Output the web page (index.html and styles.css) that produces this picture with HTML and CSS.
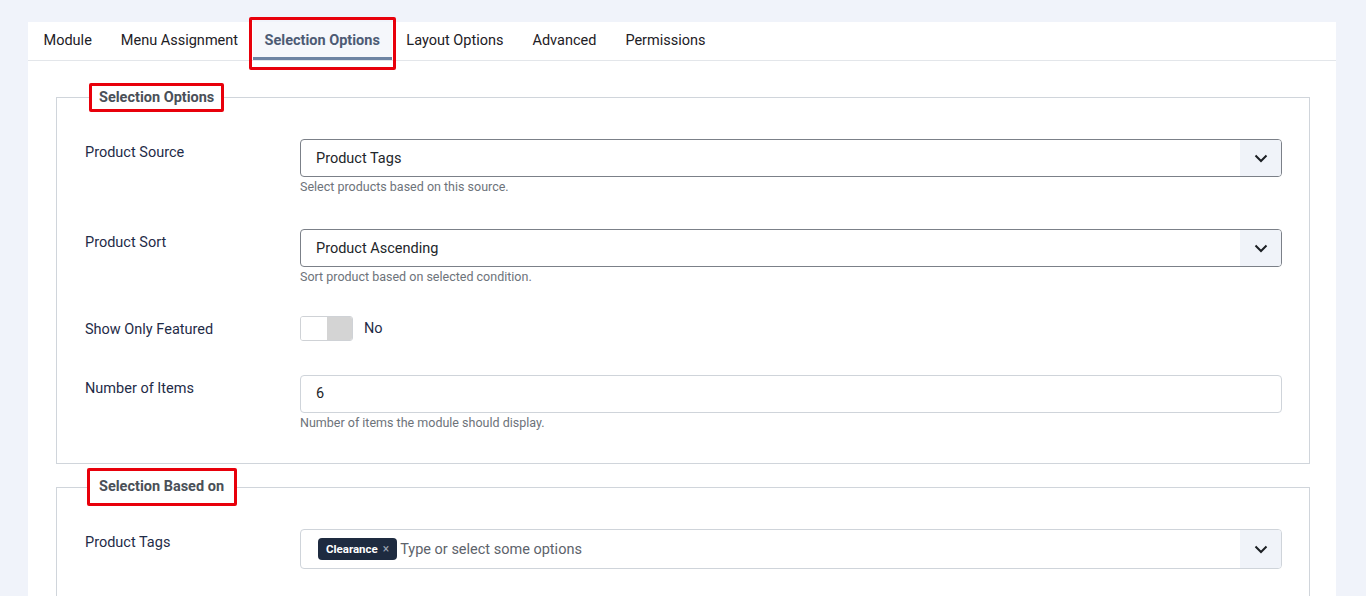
FILE: index.html
```html
<!DOCTYPE html>
<html lang="en">
<head>
    <meta charset="UTF-8">
    <meta name="viewport" content="width=device-width, initial-scale=1.0">
    <title>Module: Selection Options</title>
    <link rel="stylesheet" href="styles.css">
</head>
<body>
    <div class="panel">
        <div class="tabs">
            <div class="tab">Module</div>
            <div class="tab">Menu Assignment</div>
            <div class="tab active marked">Selection Options</div>
            <div class="tab">Layout Options</div>
            <div class="tab">Advanced</div>
            <div class="tab">Permissions</div>
        </div>

        <div class="tab-body">
            <fieldset class="options">
                <legend class="legend-mark">Selection Options</legend>

                <div class="field">
                    <label>Product Source</label>
                    <div class="control">
                        <div class="select">
                            <span class="select-value">Product Tags</span>
                            <span class="caret">
                                <svg width="14" height="9" viewBox="0 0 14 9"><path d="M1.5 1.5 L7 7 L12.5 1.5" fill="none" stroke="#1c1f24" stroke-width="2"/></svg>
                            </span>
                        </div>
                        <div class="help">Select products based on this source.</div>
                    </div>
                </div>

                <div class="field">
                    <label>Product Sort</label>
                    <div class="control">
                        <div class="select">
                            <span class="select-value">Product Ascending</span>
                            <span class="caret">
                                <svg width="14" height="9" viewBox="0 0 14 9"><path d="M1.5 1.5 L7 7 L12.5 1.5" fill="none" stroke="#1c1f24" stroke-width="2"/></svg>
                            </span>
                        </div>
                        <div class="help">Sort product based on selected condition.</div>
                    </div>
                </div>

                <div class="field switch-field">
                    <label>Show Only Featured</label>
                    <div class="control switch-row">
                        <span class="switch"><span class="switch-on"></span><span class="switch-off"></span></span>
                        <span class="switch-label">No</span>
                    </div>
                </div>

                <div class="field">
                    <label>Number of Items</label>
                    <div class="control">
                        <div class="input">6</div>
                        <div class="help">Number of items the module should display.</div>
                    </div>
                </div>
            </fieldset>

            <fieldset class="options second">
                <legend class="legend-mark wide">Selection Based on</legend>

                <div class="field">
                    <label>Product Tags</label>
                    <div class="control">
                        <div class="tags-input">
                            <span class="chip">Clearance <span class="chip-x">&times;</span></span>
                            <span class="placeholder">Type or select some options</span>
                            <span class="caret">
                                <svg width="14" height="9" viewBox="0 0 14 9"><path d="M1.5 1.5 L7 7 L12.5 1.5" fill="none" stroke="#1c1f24" stroke-width="2"/></svg>
                            </span>
                        </div>
                    </div>
                </div>
            </fieldset>
        </div>
    </div>
</body>
</html>
```

FILE: styles.css
```css
html, body {
    height: 100%;
}
body {
    margin: 0;
    padding: 22px 30px 0 28px;
    box-sizing: border-box;
    background-color: #f0f3fa;
    font-family: Roboto, "Liberation Sans", Arial, sans-serif;
    font-size: 14.5px;
    color: #22262a;
    overflow: hidden;
}
.panel {
    background-color: #fff;
    min-height: 100%;
}

/* tab strip */
.tabs {
    display: flex;
    height: 38px;
    padding-left: 1px;
    border-bottom: 1px solid #e3e6ea;
}
.tab {
    display: flex;
    align-items: center;
    padding: 0 14.5px 1px;
    font-size: 14.5px;
    color: #1d2025;
}
.tab.active {
    background-color: #f5f7fb;
    color: #4d5b74;
    font-weight: 700;
    box-shadow: inset 0 -3px 0 #6e84a3;
    padding: 0 12px 1px;
}
.marked {
    position: relative;
}
.marked::after {
    content: "";
    position: absolute;
    top: -5px;
    bottom: -10px;
    left: -4px;
    right: -4px;
    border: 3px solid #e8000b;
    border-radius: 2px;
}

.tab-body {
    padding: 22px 26px 0 28px;
}

/* fieldsets */
.options {
    margin: 0 0 4px;
    padding: 27px 27px 31px 28px;
    border: 1px solid #d0d5db;
    min-width: 0;
}
.options.second {
    padding-top: 23px;
}
.legend-mark {
    margin-left: 4px;
    padding: 0 7px;
    border: 3px solid #e8000b;
    border-radius: 2px;
    font-size: 14.5px;
    font-weight: 700;
    line-height: 23px;
    color: #4a5058;
    background: #fff;
}
.legend-mark.wide {
    margin-left: 2px;
    padding: 4px 10px 5px 9px;
}

.field {
    display: grid;
    grid-template-columns: 215px 1fr;
    margin-bottom: 33px;
}
.field:last-child {
    margin-bottom: 0;
}
.field label {
    padding-top: 3px;
    line-height: 22px;
    color: #1f2c48;
}
.switch-field {
    margin-top: -3px;
    margin-bottom: 34px;
}

.select {
    display: flex;
    align-items: center;
    height: 38px;
    box-sizing: border-box;
    border: 1px solid #7b8088;
    border-radius: 4px;
    padding-left: 15px;
}
.select-value {
    flex: 1;
}
.caret {
    display: flex;
    align-items: center;
    justify-content: center;
    width: 41px;
    align-self: stretch;
    background-color: #f0f3f9;
    border-radius: 0 3px 3px 0;
}
.help {
    margin-top: 1px;
    font-size: 12.5px;
    line-height: 18px;
    color: #6d737a;
}

.input {
    height: 38px;
    box-sizing: border-box;
    border: 1px solid #cfd4da;
    border-radius: 4px;
    padding-left: 15px;
    line-height: 36px;
}

/* switcher */
.switch-row {
    display: flex;
    align-items: center;
    gap: 11px;
    height: 25px;
}
.switch {
    display: flex;
    width: 53px;
    height: 25px;
    box-sizing: border-box;
    border: 1px solid #cfd2d6;
    border-radius: 3px;
    overflow: hidden;
}
.switch-on {
    flex: 1;
    background-color: #fff;
}
.switch-off {
    flex: 1;
    background-color: #d4d4d4;
}
.switch-label {
    color: #1f2c48;
}

/* tag picker */
.tags-input {
    display: flex;
    align-items: center;
    height: 40px;
    box-sizing: border-box;
    border: 1px solid #cfd4da;
    border-radius: 4px;
    padding-left: 17px;
}
.chip {
    display: inline-flex;
    align-items: center;
    gap: 5px;
    height: 22px;
    padding: 0 8px;
    border-radius: 4px;
    background-color: #1e2b40;
    color: #fff;
    font-size: 11.5px;
    font-weight: 700;
}
.chip-x {
    color: #9aa3b1;
    font-weight: 400;
    font-size: 12px;
}
.placeholder {
    flex: 1;
    margin-left: 3px;
    color: #5d636b;
}
```
